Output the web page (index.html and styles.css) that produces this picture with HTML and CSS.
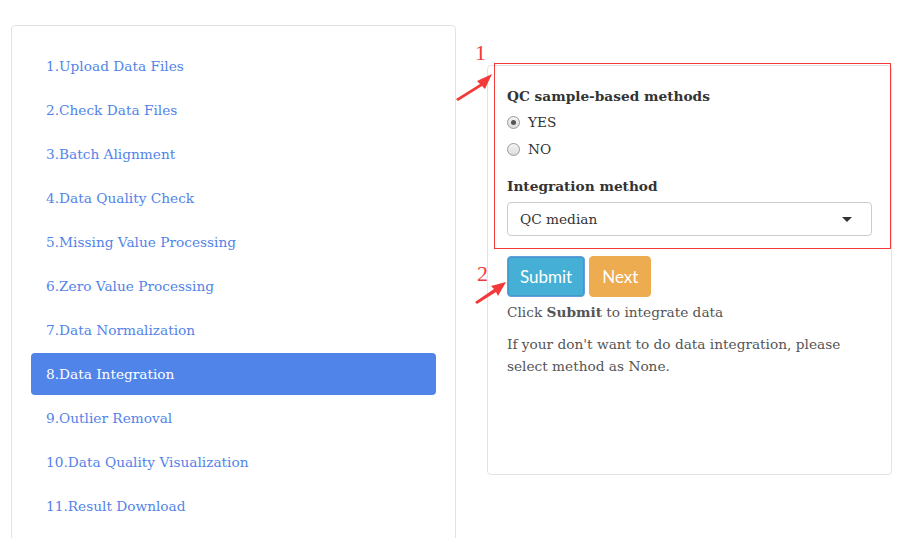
FILE: index.html
```html
<!DOCTYPE html>
<html>
<head>
<meta charset="utf-8">
<link rel="stylesheet" href="styles.css">
</head>
<body>
<div class="page">
  <div class="sidebar">
    <ul class="pills">
      <li><a>1.Upload Data Files</a></li>
      <li><a>2.Check Data Files</a></li>
      <li><a>3.Batch Alignment</a></li>
      <li><a>4.Data Quality Check</a></li>
      <li><a>5.Missing Value Processing</a></li>
      <li><a>6.Zero Value Processing</a></li>
      <li><a>7.Data Normalization</a></li>
      <li class="active"><a>8.Data Integration</a></li>
      <li><a>9.Outlier Removal</a></li>
      <li><a>10.Data Quality Visualization</a></li>
      <li><a>11.Result Download</a></li>
    </ul>
  </div>
  <div class="main">
    <div class="panel">
      <div class="group">
        <div class="label">QC sample-based methods</div>
        <div class="radio"><span class="dot checked"></span><span>YES</span></div>
        <div class="radio"><span class="dot"></span><span>NO</span></div>
      </div>
      <div class="group">
        <div class="label label-select">Integration method</div>
        <div class="select"><span>QC median</span><span class="caret"></span></div>
      </div>
      <div class="buttons">
        <span class="btn btn-info">Submit</span>
        <span class="btn btn-warning">Next</span>
      </div>
      <p>Click <b>Submit</b> to integrate data</p>
      <p>If your don't want to do data integration, please select method as None.</p>
    </div>
  </div>
</div>
<div class="anno-box"></div>
<span class="anno-num n1">1</span>
<span class="anno-num n2">2</span>
<svg class="anno-arrows" width="905" height="538" viewBox="0 0 905 538">
  <polygon points="456,99 480,84 477,81 492,74 485,89 482,86 458,101" fill="#f23a3a"/>
  <polygon points="475,302 494,289 491,286 506,282 498,296 496,292 477,304" fill="#f23a3a"/>
</svg>
</body>
</html>
```
FILE: styles.css
```css
* { box-sizing: border-box; }
html, body { margin: 0; padding: 0; background: #fff; }
body {
  font-family: "DejaVu Serif", Georgia, serif;
  font-size: 13.7px;
  color: #555;
  width: 905px;
  height: 538px;
  overflow: hidden;
  position: relative;
}
.page {
  display: flex;
  align-items: flex-start;
  padding: 25px 0 0 11px;
}
.sidebar {
  width: 445px;
  border: 1px solid #e3e3e3;
  border-radius: 4px;
  padding: 19px;
  flex-shrink: 0;
}
.pills {
  list-style: none;
  margin: 0;
  padding: 0;
  display: flex;
  flex-direction: column;
  gap: 2px;
}
.pills li a {
  display: block;
  height: 42px;
  line-height: 42px;
  padding: 0 15px;
  color: #5383e8;
  border-radius: 4px;
}
.pills li.active a {
  background: #5084e9;
  color: #fff;
}
.main {
  margin-left: 31px;
  margin-top: 40px;
  width: 405px;
}
.panel {
  border: 1px solid #e3e3e3;
  border-radius: 4px;
  padding: 20px 19px 19px;
  height: 410px;
}
.label {
  font-weight: bold;
  color: #333;
  line-height: 20px;
  margin-bottom: 5px;
}
.label-select { margin-bottom: 6px; }
.group + .group { margin-top: 16px; }
.radio {
  display: flex;
  align-items: center;
  height: 22px;
  color: #333;
}
.radio + .radio { margin-top: 5px; }
.dot {
  width: 13px;
  height: 13px;
  border-radius: 50%;
  border: 1px solid #9a9a9a;
  background: linear-gradient(#f4f4f4, #dcdcdc);
  margin-right: 8px;
  position: relative;
}
.dot.checked::after {
  content: "";
  position: absolute;
  left: 3px;
  top: 3px;
  width: 5px;
  height: 5px;
  border-radius: 50%;
  background: #555;
}
.select {
  height: 34px;
  border: 1px solid #ccc;
  border-radius: 4px;
  display: flex;
  align-items: center;
  justify-content: space-between;
  padding: 0 19px 0 12px;
  color: #333;
}
.caret {
  width: 0;
  height: 0;
  border-left: 5px solid transparent;
  border-right: 5px solid transparent;
  border-top: 5px solid #333;
}
.buttons {
  margin-top: 20px;
  display: flex;
  gap: 4px;
}
.btn {
  display: inline-block;
  height: 41px;
  line-height: 39px;
  padding: 0 12px;
  font-family: Lato, "Open Sans", sans-serif;
  font-size: 17px;
  color: #fff;
  border-radius: 4px;
  border: 1px solid transparent;
}
.btn-info {
  background: #45afd5;
  border-color: #6a9be0;
  box-shadow: inset 0 0 0 1px #3f9cc8;
}
.btn-warning {
  background: #edac50;
  border-color: #edac50;
  padding: 0 12px;
}
p {
  margin: 4px 0 10px;
  line-height: 22px;
}
p + p { margin-top: 0; }
.anno-box {
  position: absolute;
  left: 494px;
  top: 63px;
  width: 397px;
  height: 186px;
  border: 1px solid #f23a3a;
}
.anno-num {
  position: absolute;
  font-family: "Liberation Serif", serif;
  font-size: 22px;
  color: #f23a3a;
  line-height: 22px;
}
.n1 { left: 475px; top: 42px; }
.n2 { left: 477px; top: 263px; }
.anno-arrows {
  position: absolute;
  left: 0;
  top: 0;
  pointer-events: none;
}
```
